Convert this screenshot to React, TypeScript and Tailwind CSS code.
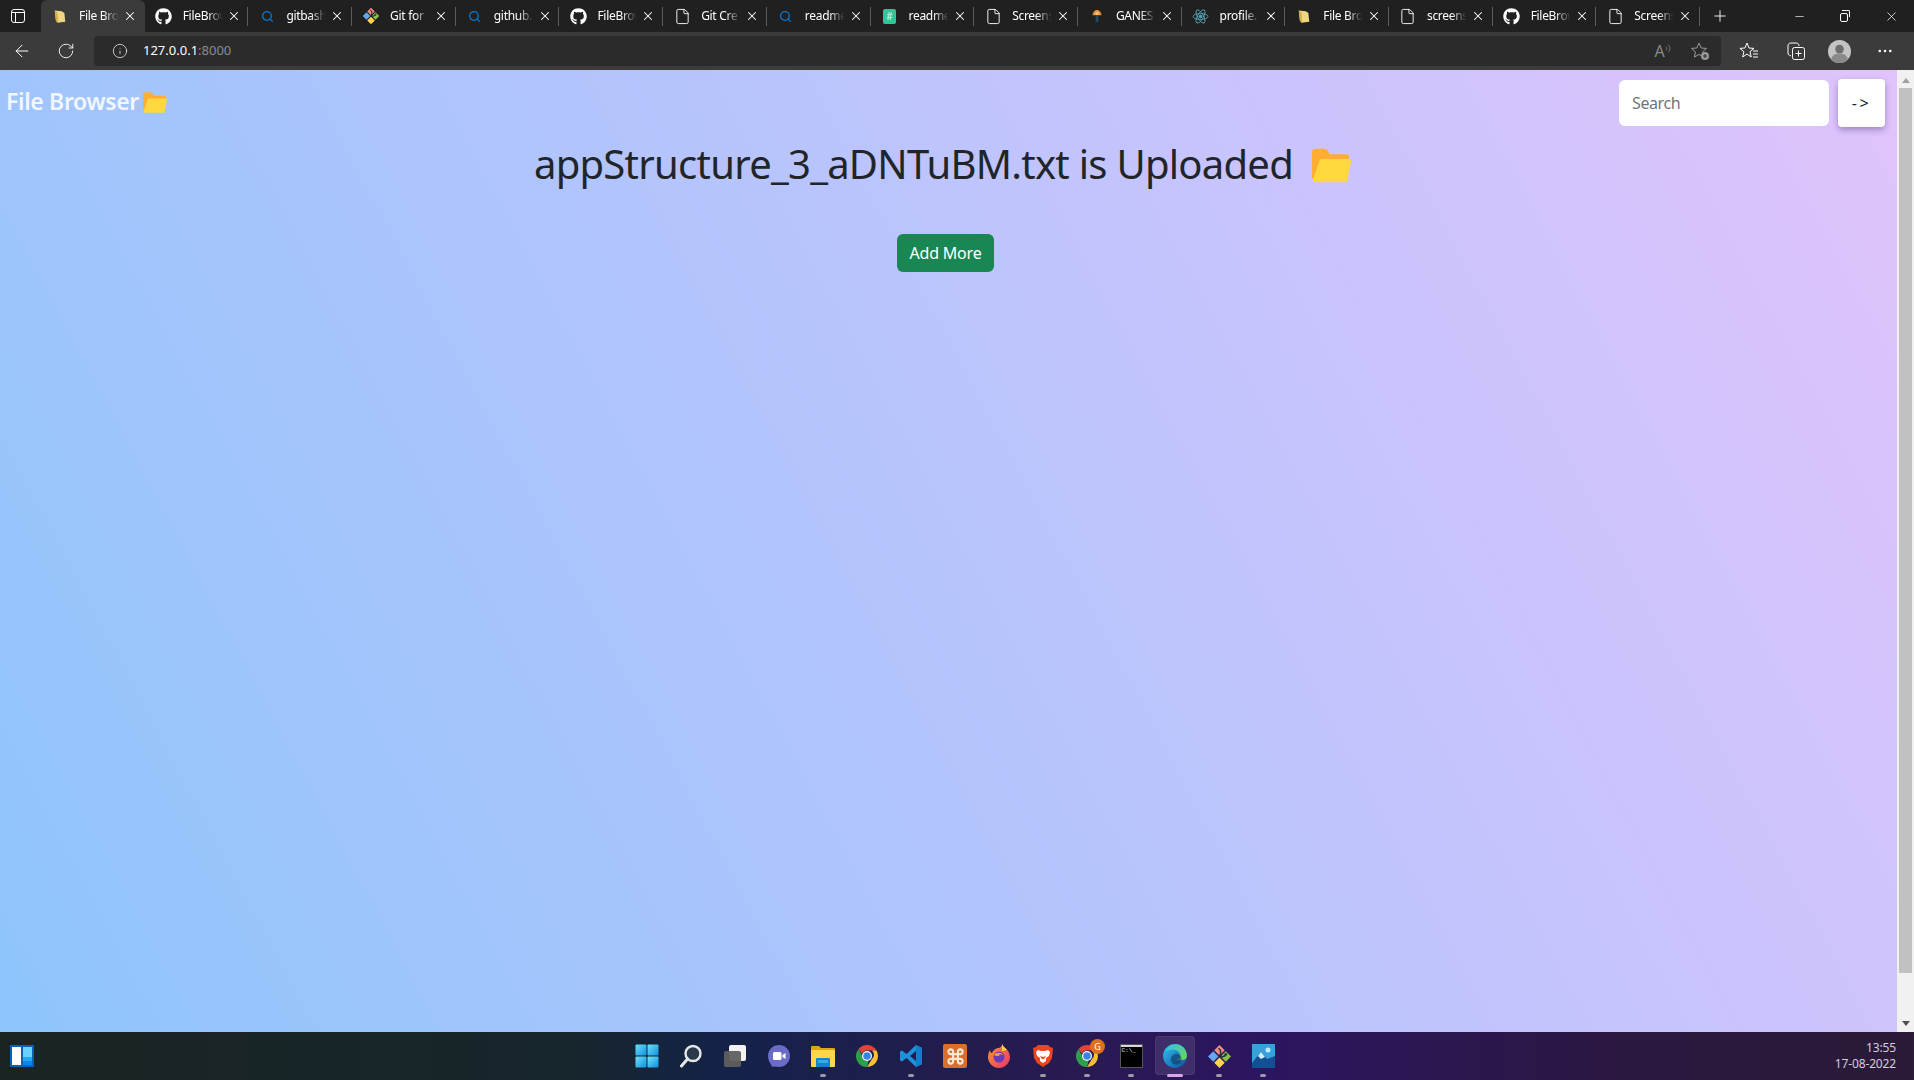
import React from "react";
import { FaGithub } from "react-icons/fa";
import { ArrowLeft, Command, File, Info, Minus, MoreHorizontal, Plus, RotateCw, Search, X } from "lucide-react";

const FolderEmoji = ({ className }: { className: string }) => (
  <svg viewBox="0 0 42 36" className={className}>
    <path d="M0 4a4 4 0 0 1 4-4h9c3 0 4 2 5 4l1 2h18a3 3 0 0 1 3 3v5L6 33H3a3 3 0 0 1-3-3z" fill="#ffae33" />
    <path d="M8 13a3 3 0 0 1 3-2h28a3 3 0 0 1 3 3l-4 19a3 3 0 0 1-3 3H4a3 3 0 0 1-3-3z" fill="#ffd83d" />
  </svg>
);

const GitDiamond = ({ size }: { size: number }) => (
  <svg viewBox="0 0 24 24" width={size} height={size}>
    <path d="M12 1l5 5-5 5-5-5z" fill="#f28b82" />
    <path d="M18 7l5 5-5 5-5-5z" fill="#8bc34a" />
    <path d="M12 13l5 5-5 5-5-5z" fill="#ffd54f" />
    <path d="M6 7l5 5-5 5-5-5z" fill="#64a8f0" />
    <path d="M11 4l2 2v5M13 13l5-2" stroke="#26323a" strokeWidth="1.4" fill="none" />
    <circle cx="13" cy="11" r="1.4" fill="#26323a" />
    <circle cx="18" cy="10" r="1.3" fill="#26323a" />
  </svg>
);

const FolderPage = () => (
  <svg viewBox="0 0 16 16" width={14} height={15}>
    <path d="M2 1l8 1 3 2 1 10-9 1-2-3z" fill="#f0d582" />
    <path d="M2 1l3 2 1 12-2-1z" fill="#cfae4c" />
  </svg>
);

const SearchFav = () => <Search size={13} strokeWidth={2.4} color="#0a78d4" />;
const PageFav = () => <File size={17} strokeWidth={1.3} color="#ffffff" />;
const GithubFav = () => <FaGithub size={17} color="#ffffff" />;
const HashFav = () => (
  <span className="flex h-[15px] w-[13px] items-center justify-center rounded-[2px] bg-[#2fc79a] text-[10px] leading-none text-[#d5fff0]">#</span>
);
const GaneshFav = () => (
  <svg viewBox="0 0 16 16" width={14} height={16}>
    <path d="M8 1c3 0 5 3 5 6H3c0-3 2-6 5-6z" fill="#e8913a" />
    <circle cx="8" cy="5" r="2" fill="#f5c26b" />
    <rect x="6.5" y="7" width="3" height="8" fill="#234a66" />
  </svg>
);
const ReactFav = () => (
  <svg viewBox="0 0 24 24" width={17} height={17} fill="none" stroke="#55a6b8" strokeWidth="1.2">
    <circle cx="12" cy="12" r="2" fill="#55a6b8" />
    <ellipse cx="12" cy="12" rx="10.5" ry="4.2" />
    <ellipse cx="12" cy="12" rx="10.5" ry="4.2" transform="rotate(60 12 12)" />
    <ellipse cx="12" cy="12" rx="10.5" ry="4.2" transform="rotate(120 12 12)" />
  </svg>
);

const tabs: { title: string; icon: React.ReactNode }[] = [
  { title: "File Bro", icon: <FolderPage /> },
  { title: "FileBrow", icon: <GithubFav /> },
  { title: "gitbash", icon: <SearchFav /> },
  { title: "Git for", icon: <GitDiamond size={18} /> },
  { title: "github.", icon: <SearchFav /> },
  { title: "FileBrow", icon: <GithubFav /> },
  { title: "Git Cre", icon: <PageFav /> },
  { title: "readme", icon: <SearchFav /> },
  { title: "readme", icon: <HashFav /> },
  { title: "Screens", icon: <PageFav /> },
  { title: "GANES", icon: <GaneshFav /> },
  { title: "profile.", icon: <ReactFav /> },
  { title: "File Bro", icon: <FolderPage /> },
  { title: "screens", icon: <PageFav /> },
  { title: "FileBrow", icon: <GithubFav /> },
  { title: "Screens", icon: <PageFav /> },
];

const Tab = ({ title, icon, active, sep }: { title: string; icon: React.ReactNode; active?: boolean; sep?: boolean }) => (
  <div className={`relative flex h-full w-[103.7px] shrink-0 items-center ${active ? "rounded-t-[6px] bg-[#3b3b3b]" : ""}`}>
    <div className="ml-[10px] flex w-[18px] shrink-0 items-center justify-center">{icon}</div>
    <div className="ml-[10px] w-[44px] shrink-0 whitespace-nowrap text-[12px] tracking-[-0.3px] text-white [mask-image:linear-gradient(to_right,#000_55%,transparent_90%)]">
      {title}
    </div>
    <X size={14} color="#ffffff" strokeWidth={1.8} className="shrink-0" />
    {sep && <div className="absolute right-0 top-[7px] h-[19px] w-px bg-[#5c5c5c]" />}
  </div>
);

const WinLogo = () => (
  <svg viewBox="0 0 24 24" width={24} height={24}>
    <defs>
      <linearGradient id="wl" x1="0" y1="0" x2="1" y2="1">
        <stop offset="0" stopColor="#6fe3f7" />
        <stop offset="1" stopColor="#0e8fe0" />
      </linearGradient>
    </defs>
    <rect x="0.5" y="0.5" width="11" height="11" rx="1" fill="url(#wl)" />
    <rect x="12.5" y="0.5" width="11" height="11" rx="1" fill="url(#wl)" />
    <rect x="0.5" y="12.5" width="11" height="11" rx="1" fill="url(#wl)" />
    <rect x="12.5" y="12.5" width="11" height="11" rx="1" fill="url(#wl)" />
  </svg>
);
const WinSearch = () => (
  <svg viewBox="0 0 24 24" width={24} height={24}>
    <circle cx="14" cy="9.5" r="7.5" fill="#2a3a4a" stroke="#e8e8e8" strokeWidth="2.4" />
    <path d="M8.5 15l-6 7" stroke="#e8e8e8" strokeWidth="3" strokeLinecap="round" />
  </svg>
);
const TaskView = () => (
  <svg viewBox="0 0 24 24" width={24} height={24}>
    <rect x="6" y="1" width="17" height="16" rx="2" fill="#f2f2f2" />
    <rect x="1" y="7" width="17" height="16" rx="2" fill="#5f5f5f" fillOpacity="0.95" />
  </svg>
);
const Chat = () => (
  <svg viewBox="0 0 24 24" width={24} height={24}>
    <path d="M12 1c6 0 11 4.8 11 11s-5 11-11 11c-2.500 0-4-1-7 0 0-2-4-5-4-11C1 5.800 6 1 12 1z" fill="#6b6bc8" />
    <rect x="6" y="8" width="8.500" height="8" rx="1.500" fill="#fff" />
    <path d="M15.500 11l3-2v6l-3-2z" fill="#fff" />
  </svg>
);
const Explorer = () => (
  <svg viewBox="0 0 24 24" width={24} height={24}>
    <path d="M0 3a1 1 0 0 1 1-1h7l2 2h13a1 1 0 0 1 1 1v3H0z" fill="#e0a410" />
    <rect x="0" y="6" width="24" height="17" rx="1" fill="#ffd54a" />
    <rect x="5" y="14" width="14" height="9" rx="1" fill="#1583c9" />
    <rect x="7" y="16" width="10" height="3" fill="#3aa8e8" />
  </svg>
);
const Chrome = ({ id }: { id: string }) => (
  <svg viewBox="0 0 24 24" width={24} height={24} data-name={id}>
    <path d="M12 1a11 11 0 0 1 9.500 5.500H12a5.500 5.500 0 0 0-5 3.200L3.500 5A11 11 0 0 1 12 1z" fill="#e0433a" />
    <path d="M21.500 6.500A11 11 0 0 1 12 23l5-8a5.500 5.500 0 0 0 0-8.500z" fill="#fbc02d" />
    <path d="M3.500 5L8 13.500A5.500 5.500 0 0 0 13.500 17L12 23A11 11 0 0 1 3.500 5z" fill="#2f9e48" />
    <circle cx="12" cy="12" r="5" fill="#fff" />
    <circle cx="12" cy="12" r="3.800" fill="#3b82e6" />
  </svg>
);
const VSCode = () => (
  <svg viewBox="0 0 24 24" width={24} height={24}>
    <path fillRule="evenodd" d="M17 1l6 3v16l-6 3L7.500 14 3 17.500 1 16.500v-9L3 6.500 7.500 10zM17 7l-6 5 6 5z" fill="#1e90dc" />
    <path d="M17 1l6 3v16l-6 3z" fill="#0f7fc8" />
  </svg>
);
const Xampp = () => (
  <div className="flex h-[24px] w-[24px] items-center justify-center rounded-[2px] bg-[#d96f2b]">
    <Command size={19} color="#ffe9d6" strokeWidth={2.6} />
  </div>
);
const Firefox = () => (
  <svg viewBox="0 0 24 24" width={24} height={24}>
    <defs>
      <linearGradient id="ff" x1="0" y1="0" x2="1" y2="1">
        <stop offset="0" stopColor="#ff9a2e" />
        <stop offset="1" stopColor="#e8336b" />
      </linearGradient>
    </defs>
    <path d="M15 0c1 3 4 4 6 7 2 3 2 6 2 6 0 6-5 11-11 11S1 19 1 13c0-3 1-5 2-7 0 2 1 3 2 3 1-3 4-5 7-5 2-1 3-2 3-4z" fill="url(#ff)" />
    <path d="M15 0c1 3 4 4 5 6l-5 1z" fill="#ffd33d" />
    <circle cx="12" cy="13" r="5.500" fill="#6a3bb8" />
    <path d="M7 11c2-3 8-3 9 0-2-1-4-1-4 1-2 0-4 0-5-1z" fill="#ff9a2e" />
  </svg>
);
const Brave = () => (
  <svg viewBox="0 0 24 24" width={24} height={24}>
    <path d="M7 1h10l2 2 3 1-1 10-3 5-6 4-6-4-3-5L2 4l3-1z" fill="#f0441c" />
    <path d="M7 6l3 1h4l3-1 2 2-1 4-3 2 0 3-3 2-3-2v-3l-3-2-1-4z" fill="#fff" />
    <path d="M9 12l2 3h2l2-3-3 1z" fill="#f0441c" />
  </svg>
);
const Terminal = () => (
  <div className="flex h-[24px] w-[23px] flex-col overflow-hidden border border-[#555] bg-black">
    <div className="h-[2px] w-full bg-[#d8d8d8]" />
    <div className="pl-[1px] font-['Liberation_Mono',monospace] text-[6px] leading-[8px] text-[#e8e8e8]">C:\_</div>
  </div>
);
const Edge = () => (
  <svg viewBox="0 0 24 24" width={26} height={26}>
    <defs>
      <linearGradient id="eb" x1="0" y1="0" x2="1" y2="1">
        <stop offset="0" stopColor="#35c1f1" />
        <stop offset="1" stopColor="#0a4f9e" />
      </linearGradient>
      <linearGradient id="eg" x1="0" y1="0" x2="1" y2="1">
        <stop offset="0" stopColor="#35c1f1" />
        <stop offset="1" stopColor="#6fd84a" />
      </linearGradient>
    </defs>
    <circle cx="12" cy="12" r="11" fill="url(#eb)" />
    <path d="M3 8C5 2 12 0 17 2c4 2 6 6 6 10 0 3-3 4-6 4-3 0-4-1-4-1 2 0 4-1 4-3 0-3-3-6-7-6-3 0-6 1-7 2z" fill="url(#eg)" />
    <circle cx="13" cy="15" r="5" fill="#11305e" fillOpacity="0.55" />
  </svg>
);
const Photos = () => (
  <svg viewBox="0 0 24 24" width={24} height={24}>
    <rect x="1" y="0" width="23" height="24" fill="#3aa0dc" />
    <circle cx="17" cy="6" r="2.500" fill="#bfe9ff" />
    <path d="M1 19l9-11 6 7 8-3v12H1z" fill="#134f93" />
    <path d="M10 8l4 5-4 2-3-3z" fill="#cfefff" />
  </svg>
);

const taskItems: { icon: React.ReactNode; dot?: boolean; badge?: boolean; active?: boolean }[] = [
  { icon: <WinLogo /> },
  { icon: <WinSearch /> },
  { icon: <TaskView /> },
  { icon: <Chat /> },
  { icon: <Explorer />, dot: true },
  { icon: <Chrome id="c1" /> },
  { icon: <VSCode />, dot: true },
  { icon: <Xampp /> },
  { icon: <Firefox /> },
  { icon: <Brave />, dot: true },
  { icon: <Chrome id="c2" />, dot: true, badge: true },
  { icon: <Terminal />, dot: true },
  { icon: <Edge />, active: true },
  { icon: <GitDiamond size={25} />, dot: true },
  { icon: <Photos />, dot: true },
];

const TaskItem = ({ icon, dot, badge, active }: { icon: React.ReactNode; dot?: boolean; badge?: boolean; active?: boolean }) => (
  <div className="relative flex h-[40px] w-[44px] shrink-0 items-center justify-center">
    {active && <div className="absolute left-[2px] top-0 h-[39px] w-[40px] rounded-[4px] border border-white/5 bg-white/10" />}
    <div className="relative">{icon}</div>
    {badge && (
      <div className="absolute left-[25px] top-[3px] flex h-[15px] w-[15px] items-center justify-center rounded-full bg-[#e0701c] text-[9px] leading-none text-white">G</div>
    )}
    {dot && <div className="absolute bottom-[-1px] left-[19px] h-[3px] w-[6px] rounded-full bg-[#9a9aa5]" />}
    {active && <div className="absolute bottom-[-1px] left-[14px] h-[3px] w-[16px] rounded-full bg-[#d9a6e8]" />}
  </div>
);

export default function App() {
  return (
    <div className="flex h-screen w-screen flex-col overflow-hidden font-['Noto_Sans','Open_Sans',sans-serif]">
      {/* tab strip */}
      <div className="flex h-[32px] shrink-0 items-center bg-[#202020]">
        <div className="flex h-full w-[41px] shrink-0 items-center justify-center pr-[5px]">
          <div className="relative h-[14px] w-[14px] rounded-[3px] border border-white">
            <div className="absolute left-0 right-0 top-[2px] h-px bg-white" />
            <div className="absolute bottom-0 left-[3px] top-[2px] w-px bg-white" />
          </div>
        </div>
        {tabs.map((t, i) => (
          <Tab key={i} title={t.title} icon={t.icon} active={i === 0} sep={i > 0} />
        ))}
        <div className="ml-[11px] flex h-full items-center">
          <Plus size={18} color="#ffffff" strokeWidth={1.2} />
        </div>
        <div className="ml-auto flex h-full items-center">
          <div className="flex w-[46px] justify-center"><Minus size={13} color="#ffffff" strokeWidth={1.2} /></div>
          <div className="flex w-[46px] justify-center">
            <div className="relative mr-[2px] mt-[2px] h-[9px] w-[8px] rounded-[2px] border border-white">
              <div className="absolute left-[1px] top-[-4px] h-[7px] w-[8px] rounded-tr-[2px] border-r border-t border-white" />
            </div>
          </div>
          <div className="flex w-[46px] justify-center"><X size={15} color="#ffffff" strokeWidth={1.2} /></div>
        </div>
      </div>

      {/* toolbar */}
      <div className="flex h-[38px] shrink-0 items-center bg-[#3b3b3b]">
        <div className="flex w-[44px] justify-center"><ArrowLeft size={20} color="#ffffff" strokeWidth={1.2} /></div>
        <div className="flex w-[44px] justify-center"><RotateCw size={18} color="#ffffff" strokeWidth={1.2} /></div>
        <div className="ml-[6px] flex h-[30px] w-[1627px] shrink-0 items-center rounded-[4px] bg-[#2b2b2b]">
          <Info size={16} color="#e6e6e6" strokeWidth={1.2} className="ml-[18px]" />
          <div className="ml-[15px] text-[13px] text-white">
            127.0.0.1<span className="text-[#8c8c8c]">:8000</span>
          </div>
          <div className="ml-auto flex items-center">
            <div className="flex w-[38px] items-center justify-center">
              <span className="text-[16px] leading-none text-[#8a8a8a]">A</span>
              <svg viewBox="0 0 8 12" width={7} height={11} fill="none" stroke="#8a8a8a" strokeWidth="1" className="mb-[6px]">
                <path d="M1 4c1.500 1 1.500 3 0 4M3.500 2c3 2 3 6 0 8" />
              </svg>
            </div>
            <div className="relative mr-[3px] flex w-[36px] justify-center">
              <svg viewBox="0 0 20 20" width={20} height={20} fill="none" stroke="#9a9a9a" strokeWidth="1">
                <path d="M9 2l2.200 5 5.300.4-4 3.500 1.200 5.200L9 13.400l-4.700 2.700 1.200-5.200-4-3.500 5.300-.4z" />
                <circle cx="15" cy="15" r="4" fill="#9a9a9a" stroke="none" />
                <path d="M15 13v4M13 15h4" stroke="#2b2b2b" />
              </svg>
            </div>
          </div>
        </div>
        <div className="flex w-[56px] justify-center">
          <svg viewBox="0 0 20 20" width={20} height={20} fill="none" stroke="#ffffff" strokeWidth="1">
            <path d="M8 2l2 5 5 .4-4 3.300 1.200 5.300L8 13l-4.300 3 1.200-5.300-4-3.300 5-.4z" />
            <path d="M14 10h5M14 13h5M14 16h5" />
          </svg>
        </div>
        <div className="flex w-[38px] justify-center">
          <svg viewBox="0 0 20 20" width={20} height={20} fill="none" stroke="#ffffff" strokeWidth="1">
            <rect x="6.500" y="6.500" width="12" height="12" rx="2" />
            <path d="M12.500 9.500v6M9.500 12.500h6M5 15c-2-1-3-1-3-3V5c0-2 1-3 3-3h5c2 0 3 1 3 3" />
          </svg>
        </div>
        <div className="flex w-[48px] justify-center">
          <svg viewBox="0 0 24 24" width={23} height={23}>
            <circle cx="12" cy="12" r="12" fill="#c4c4c4" />
            <circle cx="12" cy="9.500" r="4.500" fill="#6e6e6e" />
            <path d="M3 20c2-5 5-6 9-6s7 1 9 6c-2 3-6 4-9 4s-7-1-9-4z" fill="#8a8a8a" />
          </svg>
        </div>
        <div className="flex w-[44px] justify-center"><MoreHorizontal size={18} color="#ffffff" strokeWidth={1.5} /></div>
      </div>

      {/* page */}
      <div className="flex min-h-0 flex-1">
        <div className="flex min-w-0 flex-1 flex-col bg-[linear-gradient(62deg,#8EC5FC_0%,#E0C3FC_100%)]">
          <div className="flex items-start justify-between pl-[6px] pr-[12px] pt-[9px]">
            <div className="mt-[7px] flex items-center">
              <span className="text-[23px] font-semibold leading-[30px] tracking-[-0.35px] text-white/85">File Browser</span>
              <FolderEmoji className="ml-[4px] mt-[3px] h-[21px] w-[24px]" />
            </div>
            <div className="flex items-center">
              <div className="flex h-[46px] w-[210px] items-center rounded-[6px] bg-white pl-[13px] text-[16px] tracking-[-0.4px] text-[#6c757d]">Search</div>
              <div className="ml-[9px] flex h-[48px] w-[47px] items-center justify-center rounded-[4px] bg-white text-[16px] tracking-[2.5px] text-[#212529] shadow-[0_3px_6px_rgba(60,50,110,0.4)]">-&gt;</div>
            </div>
          </div>
          <div className="mt-[7px] flex items-center justify-center pr-[12px]">
            <h1 className="text-[40px] font-normal leading-[60px] tracking-[-0.74px] text-[#212529]">appStructure_3_aDNTuBM.txt is Uploaded</h1>
            <FolderEmoji className="ml-[19px] mt-[3px] h-[35px] w-[39px]" />
          </div>
          <div className="mt-[40px] flex justify-center pr-[6px]">
            <div className="flex h-[38px] w-[97px] items-center justify-center rounded-[6px] bg-[#198754] text-[16px] tracking-[-0.2px] text-white">Add More</div>
          </div>
        </div>
        {/* scrollbar */}
        <div className="flex w-[17px] shrink-0 flex-col items-center bg-[#f1f1f1]">
          <div className="flex h-[18px] w-full items-center justify-center pt-[2px]">
            <div className="h-0 w-0 border-x-[4px] border-b-[5px] border-x-transparent border-b-[#a0a0a0]" />
          </div>
          <div className="h-[885px] w-[13px] bg-[#c1c1c1]" />
          <div className="mt-auto flex h-[18px] w-full items-center justify-center">
            <div className="h-0 w-0 border-x-[4px] border-t-[5px] border-x-transparent border-t-[#505050]" />
          </div>
        </div>
      </div>

      {/* taskbar */}
      <div className="flex h-[48px] shrink-0 items-center bg-[linear-gradient(90deg,#1a2423_0%,#17262c_30%,#14224a_38%,#281a50_55%,#2c1560_66%,#2b1840_85%,#2b1a38_100%)]">
        <div className="ml-[10px] flex h-[22px] w-[24px] shrink-0 items-center gap-[2px] bg-[#0a62b8] p-[2px]">
          <div className="h-full w-[9px] bg-white" />
          <div className="flex h-full w-[9px] flex-col">
            <div className="h-[10px] bg-[#6ad2ff]" />
            <div className="h-[4px] bg-[#25a5f5]" />
            <div className="flex-1 bg-[#0a86e8]" />
          </div>
        </div>
        <div className="ml-[591px] flex shrink-0 items-center">
          {taskItems.map((t, i) => (
            <TaskItem key={i} {...t} />
          ))}
        </div>
        <div className="ml-auto mr-[18px] flex flex-col items-end text-[12px] leading-[16px] tracking-[-0.15px] text-[#d3cfd8]">
          <span>13:55</span>
          <span>17-08-2022</span>
        </div>
      </div>
    </div>
  );
}
